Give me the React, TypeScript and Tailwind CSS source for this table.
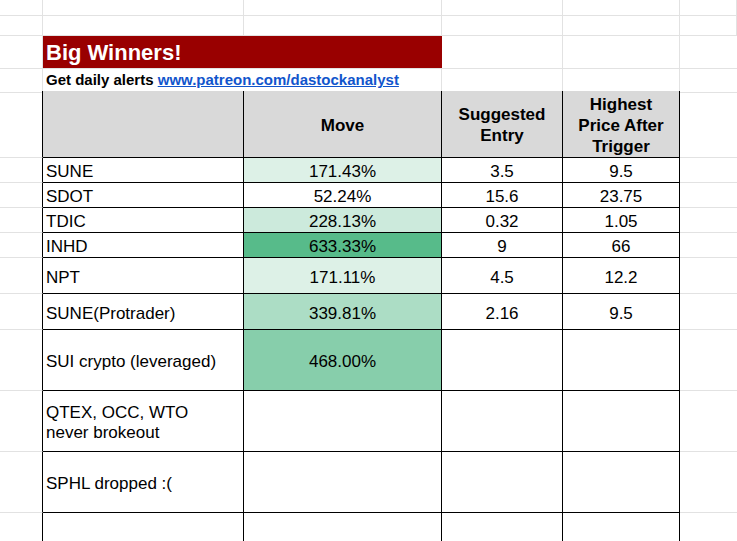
import clsx from "clsx"

const grid = "grid grid-cols-[43px_201px_198px_121px_117px_1fr]"

type Row = {
  name: React.ReactNode
  move?: string
  bg?: string
  entry?: string
  high?: string
  h: string
}

const rows: Row[] = [
  { name: "SUNE", move: "171.43%", bg: "bg-[#ddf1e7]", entry: "3.5", high: "9.5", h: "h-[25px]" },
  { name: "SDOT", move: "52.24%", bg: "bg-white", entry: "15.6", high: "23.75", h: "h-[25px]" },
  { name: "TDIC", move: "228.13%", bg: "bg-[#cceadc]", entry: "0.32", high: "1.05", h: "h-[25px]" },
  { name: "INHD", move: "633.33%", bg: "bg-[#57bb8a]", entry: "9", high: "66", h: "h-[25px]" },
  { name: "NPT", move: "171.11%", bg: "bg-[#ddf1e7]", entry: "4.5", high: "12.2", h: "h-[36px]" },
  { name: "SUNE(Protrader)", move: "339.81%", bg: "bg-[#acddc5]", entry: "2.16", high: "9.5", h: "h-[36px]" },
  { name: "SUI crypto (leveraged)", move: "468.00%", bg: "bg-[#87ceab]", h: "h-[61px]" },
  {
    name: (
      <>
        QTEX, OCC, WTO
        <br />
        never brokeout
      </>
    ),
    h: "h-[61px]",
  },
  { name: "SPHL dropped :(", h: "h-[61px]" },
  { name: "", h: "h-[40px]" },
]

// plain spreadsheet row with only gridlines
function BlankRow({ h }: { h: string }) {
  return (
    <div className={clsx(grid, h)}>
      {[0, 1, 2, 3, 4, 5].map((i) => (
        <div key={i} className="border-r border-b border-[#e2e2e2]" />
      ))}
    </div>
  )
}

export default function App() {
  return (
    <div className="w-[737px] h-[541px] overflow-hidden bg-white text-black font-['Liberation_Sans',Arial,sans-serif]">
      <BlankRow h="h-[16px]" />
      <BlankRow h="h-[20px]" />

      {/* title */}
      <div className={clsx(grid, "h-[33px]")}>
        <div className="border-r border-b border-[#e2e2e2]" />
        <div className="col-span-2 bg-[#990000] border-b border-[#e2e2e2] flex items-center pl-[3px] text-[22px] font-bold text-white leading-[25px]">
          Big Winners!
        </div>
        <div className="border-r border-b border-[#e2e2e2]" />
        <div className="border-r border-b border-[#e2e2e2]" />
        <div className="border-b border-[#e2e2e2]" />
      </div>

      {/* subtitle */}
      <div className={clsx(grid, "h-[22px]")}>
        <div className="border-r border-b border-[#e2e2e2]" />
        <div className="col-span-2 border-r border-[#e2e2e2] border-b border-b-black flex items-center pl-[3px] text-[15px] font-bold whitespace-nowrap">
          Get daily alerts&nbsp;
          <a href="#" className="text-[#1155cc] underline">
            www.patreon.com/dastockanalyst
          </a>
        </div>
        <div className="border-r border-[#e2e2e2] border-b border-b-black" />
        <div className="border-r border-[#e2e2e2] border-b border-b-black" />
        <div className="border-b border-[#e2e2e2]" />
      </div>

      {/* header */}
      <div className={clsx(grid, "h-[67px] text-[17px] font-bold leading-[21px]")}>
        <div className="border-r border-r-black border-b border-b-[#e2e2e2]" />
        <div className="bg-[#d9d9d9] border-r border-b border-black" />
        <div className="bg-[#d9d9d9] border-r border-b border-black flex items-center justify-center pt-[2px]">Move</div>
        <div className="bg-[#d9d9d9] border-r border-b border-black flex items-center justify-center text-center pt-[2px]">
          Suggested
          <br />
          Entry
        </div>
        <div className="bg-[#d9d9d9] border-r border-b border-black flex items-center justify-center text-center pt-[2px]">
          Highest
          <br />
          Price After
          <br />
          Trigger
        </div>
        <div className="border-b border-[#e2e2e2]" />
      </div>

      {rows.map((r, i) => (
        <div key={i} className={clsx(grid, r.h, "text-[17px] leading-[20px]")}>
          <div className="border-r border-r-black border-b border-b-[#e2e2e2]" />
          <div className="border-r border-b border-black flex items-center pl-[3px] pt-[4px]">
            <div>{r.name}</div>
          </div>
          <div className={clsx("border-r border-b border-black flex items-center justify-center pt-[4px]", r.bg)}>{r.move}</div>
          <div className="border-r border-b border-black flex items-center justify-center pt-[4px]">{r.entry}</div>
          <div className="border-r border-b border-black flex items-center justify-center pt-[4px]">{r.high}</div>
          <div className="border-b border-[#e2e2e2]" />
        </div>
      ))}
    </div>
  )
}
